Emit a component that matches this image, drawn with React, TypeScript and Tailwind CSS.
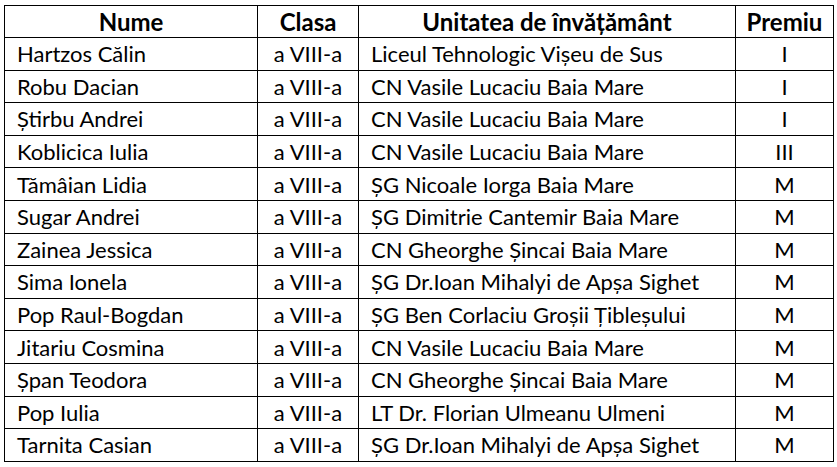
import React from 'react';

const rows = [
  { name: 'Hartzos Călin', school: 'Liceul Tehnologic Vișeu de Sus', prize: 'I' },
  { name: 'Robu Dacian', school: 'CN Vasile Lucaciu Baia Mare', prize: 'I' },
  { name: 'Știrbu Andrei', school: 'CN Vasile Lucaciu Baia Mare', prize: 'I' },
  { name: 'Koblicica Iulia', school: 'CN Vasile Lucaciu Baia Mare', prize: 'III' },
  { name: 'Tămâian Lidia', school: 'ȘG Nicoale Iorga Baia Mare', prize: 'M' },
  { name: 'Sugar Andrei', school: 'ȘG Dimitrie Cantemir Baia Mare', prize: 'M' },
  { name: 'Zainea Jessica', school: 'CN Gheorghe Șincai Baia Mare', prize: 'M' },
  { name: 'Sima Ionela', school: 'ȘG Dr.Ioan Mihalyi de Apșa Sighet', prize: 'M' },
  { name: 'Pop Raul-Bogdan', school: 'ȘG Ben Corlaciu Groșii Țibleșului', prize: 'M' },
  { name: 'Jitariu Cosmina', school: 'CN Vasile Lucaciu Baia Mare', prize: 'M' },
  { name: 'Șpan Teodora', school: 'CN Gheorghe Șincai Baia Mare', prize: 'M' },
  { name: 'Pop Iulia', school: 'LT Dr. Florian Ulmeanu Ulmeni', prize: 'M' },
  { name: 'Tarnita Casian', school: 'ȘG Dr.Ioan Mihalyi de Apșa Sighet', prize: 'M' },
];

export default function App() {
  return (
    <div className="w-[837px] h-[467px] bg-white pl-[4px] pt-[5px] text-black font-['Lato',_'Liberation_Sans',_sans-serif] text-[22px] leading-none">
      <table className="border-collapse table-fixed w-[829px]">
        <colgroup>
          <col className="w-[253px]" />
          <col className="w-[101px]" />
          <col className="w-[377px]" />
          <col className="w-[98px]" />
        </colgroup>
        <thead>
          <tr className="h-[32px] font-bold text-[24px]">
            <th className="border border-black text-center">Nume</th>
            <th className="border border-black text-center">Clasa</th>
            <th className="border border-black text-center">Unitatea de învățământ</th>
            <th className="border border-black text-center">Premiu</th>
          </tr>
        </thead>
        <tbody>
          {rows.map((r) => (
            <tr key={r.name} className="h-[32.6px]">
              <td className="border border-black pl-[12px] pt-[1px] whitespace-nowrap">{r.name}</td>
              <td className="border border-black text-center pt-[1px] whitespace-nowrap">a VIII-a</td>
              <td className="border border-black pl-[12px] pt-[1px] whitespace-nowrap">{r.school}</td>
              <td className="border border-black text-center pt-[1px]">{r.prize}</td>
            </tr>
          ))}
        </tbody>
      </table>
    </div>
  );
}
